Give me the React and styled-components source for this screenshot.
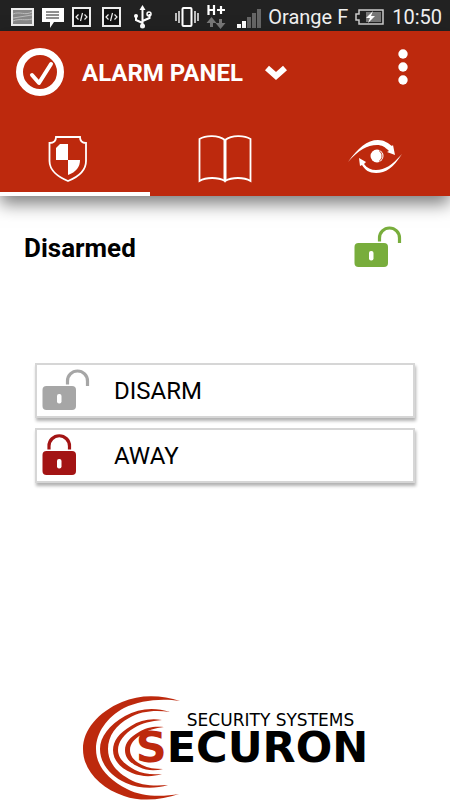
import React, { useState } from 'react'
import styled, { createGlobalStyle } from 'styled-components'

const GlobalStyle = createGlobalStyle`
  *{
    box-sizing: border-box;
  }
  body{
    margin: 0;
    background: #fff;
    color: #000;
    font-family: Roboto, "Liberation Sans", sans-serif;
  }
  button{
    font-family: inherit;
    border: none;
    margin: 0;
    padding: 0;
    background: none;
    color: inherit;
    cursor: pointer;
  }
  svg{
    display: block;
    flex: none;
  }
`

const Page = styled.div`
  min-height: 100vh;
  display: flex;
  flex-direction: column;
`

const StatusBar = styled.div`
  display: flex;
  justify-content: space-between;
  align-items: center;
  height: 31px;
  padding: 2px 8px 0 10px;
  background: #222;
  color: #f0f0f0;
  font-size: 20px;
  line-height: 28px;
  white-space: nowrap;
`

const StatusGroup = styled.div`
  display: flex;
  align-items: center;
  gap: ${props => props.$gap}px;
`

const Header = styled.header`
  background: #bd290d;
  color: #fff;
  box-shadow: 0 8px 16px rgba(0, 0, 0, 0.5);
`

const TitleRow = styled.div`
  display: flex;
  align-items: center;
  height: 82px;
  padding: 0 32px 0 16px;
`

const PanelButton = styled.button`
  display: flex;
  align-items: center;
  gap: 21px;
  margin-left: 18px;
  padding-top: 2px;
`

const Title = styled.span`
  font-size: 24px;
  font-weight: 700;
  line-height: 32px;
`

const MenuButton = styled.button`
  margin-left: auto;
  padding-bottom: 10px;
`

const Tabs = styled.nav`
  display: grid;
  grid-template-columns: repeat(3, 1fr);
  height: 83px;
`

const Tab = styled.button`
  display: flex;
  justify-content: center;
  align-items: center;
  padding-top: 12px;
  border-bottom: 4px solid ${props => props.$active ? '#fff' : 'transparent'};
`

const Status = styled.section`
  display: flex;
  justify-content: space-between;
  align-items: center;
  padding: 28px 48px 0 24px;
  h2{
    margin: 0;
    font-size: 26px;
    font-weight: 700;
    line-height: 48px;
  }
`

const Actions = styled.section`
  display: flex;
  flex-direction: column;
  gap: 10px;
  padding: 91px 35px 40px;
`

const ActionButton = styled.button`
  display: flex;
  align-items: center;
  gap: 24px;
  height: 55px;
  padding-left: 5px;
  border: 2px solid #d6d6d6;
  background: #fff;
  box-shadow: 1px 3px 3px rgba(0, 0, 0, 0.3);
  font-size: 24px;
  line-height: 32px;
`

const Brand = styled.footer`
  display: flex;
  justify-content: center;
  margin-top: auto;
`

const BrandText = styled.div`
  display: flex;
  flex-direction: column;
  align-items: flex-end;
  margin-left: -46px;
  padding-top: 15px;
  font-family: "DejaVu Sans", sans-serif;
  white-space: nowrap;
`

const Tagline = styled.span`
  padding-right: 14px;
  font-size: 17px;
  line-height: 20px;
`

const BrandName = styled.strong`
  font-size: 43px;
  font-weight: 700;
  line-height: 34px;
  span{
    color: #bd290d;
  }
`

function StatusIcon({ children }) {
  return (
    <svg width="24" height="24" viewBox="0 0 24 24" fill="none" aria-hidden="true">
      {children}
    </svg>
  )
}

function CodeIcon() {
  return (
    <StatusIcon>
      <rect x="3" y="3" width="17" height="18" fill="#111" stroke="#eee" strokeWidth="2" />
      <path d="M8.500 9.500 6 12l2.500 2.500M14.500 9.500 17 12l-2.500 2.500M12.500 8l-2 8" stroke="#eee" strokeWidth="1.200" />
    </StatusIcon>
  )
}

function LockIcon({ color, open }) {
  return (
    <svg width="48" height="44" viewBox="0 0 48 44" fill="none" aria-hidden="true">
      <rect x="0.500" y="17" width="33.500" height="24" rx="4" fill={color} />
      <rect x="15" y="25" width="4.500" height="9.500" rx="2" fill="#fff" />
      <path
        d={open ? 'M25.500 15.500v-3.500a10 10 0 0 1 20 0v5' : 'M7 15.500v-3.500a10 10 0 0 1 20.500 0v3.500'}
        stroke={color}
        strokeWidth="3.200"
      />
    </svg>
  )
}

function ShieldIcon() {
  return (
    <svg width="54" height="50" viewBox="0 0 54 50" fill="none" aria-hidden="true">
      <path d="M8 3h24c0 4 2 6 6 6v18c0 9-8 16-18 20C10 43 1.500 36 1.500 27V9C6 9 8 7 8 3z" stroke="#fff" strokeWidth="1.800" />
      <path d="M20 10v16H8V14l4-4z" fill="#fff" />
      <path d="M20 26h12c0 7-4 12-12 15z" fill="#fff" />
    </svg>
  )
}

function BookIcon() {
  return (
    <svg width="54" height="50" viewBox="0 0 54 50" fill="none" aria-hidden="true">
      <path d="M27 6C20 1 8 1 1.500 5v42C8 43 20 43 27 47zM27 6C34 1 46 1 52.500 5v42C46 43 34 43 27 47z" stroke="#fff" strokeWidth="1.800" />
      <path d="M27 6v41" stroke="#fff" strokeWidth="3" />
    </svg>
  )
}

function EyeIcon() {
  return (
    <svg width="54" height="50" viewBox="0 0 54 50" fill="none" aria-hidden="true">
      <path d="M0 28C10 14 19 6 30 6c6 0 10 3 14 6l1-1 2 10-8-3 2-1c-4-4-7-6-12-6C19 11 11 16 0 28z" fill="#fff" />
      <path d="M54 20C45 34 38 39 28 39c-7 0-11-3-14-8l-2 1-1-8 7 4-2 2c3 4 7 6 12 6 9 0 16-5 26-16z" fill="#fff" />
      <circle cx="29" cy="22" r="6.500" fill="#fff" />
      <path d="M31 16.500c4 3 4 8 0 11" stroke="#bd290d" strokeWidth="0.900" />
    </svg>
  )
}

function BrandArcs() {
  return (
    <svg width="100" height="105" viewBox="0 0 100 105" fill="#bd290d" aria-hidden="true">
      <path d="M98 6C80 0 58-1 40 7 16 17 1 35 1 54c0 21 17 39 41 47 17 6 38 4 55-2-17 3-37 3-52-5-20-10-31-24-31-40s11-32 28-41C58 5 80 3 98 6z" />
      <path d="M88 17C73 12 57 13 43 21 27 30 18 42 18 54c0 14 10 27 26 34 14 6 29 6 42 2-13 1-27 1-39-6-14-8-21-18-21-30 0-13 8-24 21-31 12-7 26-8 41-6z" />
      <path d="M80 25c-11-2-22 0-31 6-12 7-18 15-18 24 0 10 7 18 19 23 10 4 20 4 30 1-10 1-19 0-27-4-11-6-17-12-17-20s6-16 16-22c8-5 17-7 28-8z" />
      <path d="M82 32c-9-1-18 0-25 5-9 5-14 11-14 18 0 8 5 13 14 17 8 4 16 4 24 2-8 0-15-1-21-4-8-4-12-9-12-15s4-11 11-15c7-5 14-7 23-8z" />
    </svg>
  )
}

const tabs = [
  { id: 'alarm', label: 'Alarm', Icon: ShieldIcon },
  { id: 'events', label: 'Events', Icon: BookIcon },
  { id: 'cameras', label: 'Cameras', Icon: EyeIcon }
]

function PhoneStatus() {
  return (
    <StatusBar>
      <StatusGroup $gap={6}>
        <StatusIcon>
          <rect x="2" y="4" width="21" height="16" fill="#888" stroke="#eee" strokeWidth="2" />
          <path d="M3 9c7-3 12 2 19-2M3 13l19-3M3 16c7-3 12 0 19-2" stroke="#bbb" />
        </StatusIcon>
        <StatusIcon>
          <path d="M2 3h22v14H14l-4 6v-6H2z" fill="#fff" />
          <path d="M6 7h13M6 10h13M6 13h13" stroke="#222" />
        </StatusIcon>
        <CodeIcon />
        <CodeIcon />
        <StatusIcon>
          <path d="M12.500 3v19M12.500 18 6 15v-4M12.500 16l7-3V9" stroke="#fff" strokeWidth="2" />
          <path d="m12.500 0 3 5h-6z" fill="#fff" />
          <circle cx="6" cy="11" r="2" fill="#fff" />
          <circle cx="19" cy="9" r="2" stroke="#fff" strokeWidth="1.500" />
          <circle cx="12.500" cy="21" r="2.500" fill="#fff" />
        </StatusIcon>
      </StatusGroup>
      <StatusGroup $gap={7}>
        <StatusIcon>
          <rect x="7.500" y="3" width="9" height="18" rx="1" stroke="#fff" strokeWidth="2" />
          <path d="M4 6v12M1 8v8M20 6v12M23 8v8" stroke="#fff" strokeWidth="1.400" />
        </StatusIcon>
        <StatusIcon>
          <path d="M2.500 0v10M8 0v10M2 5h6M11 5h8M15 1v8" stroke="#fff" strokeWidth="2.200" />
          <path d="m5.500 12 5 6H7v4H4v-4H.500zM14.500 24l-5-6H13v-4h3v4h3.500z" fill="#777" />
        </StatusIcon>
        <StatusIcon>
          <path d="M0 19h4v4H0zM5 16h4v7H5z" fill="#fff" />
          <path d="M10 12h4v11h-4zM15 8h4v15h-4zM20 4h4v19h-4z" fill="#666" />
        </StatusIcon>
        <span>Orange F</span>
        <svg width="30" height="18" viewBox="0 0 30 18" fill="none" aria-hidden="true">
          <path d="M4 2h24v14H4v-4H1V6h3z" fill="#222" stroke="#ccc" strokeWidth="1.500" />
          <path d="M11 4h15v10H11z" fill="#777" />
          <path d="m18 3-7 7h4l-2 5 7-7h-4z" fill="#fff" />
        </svg>
        <span>10:50</span>
      </StatusGroup>
    </StatusBar>
  )
}

function App() {
  const [activeTab, setActiveTab] = useState('alarm')

  return (
    <Page>
      <GlobalStyle />
      <PhoneStatus />
      <Header>
        <TitleRow>
          <svg width="48" height="48" viewBox="0 0 48 48" fill="none" aria-hidden="true">
            <circle cx="24" cy="24" r="20.500" stroke="#fff" strokeWidth="7" />
            <path d="m16 27 7 8 12-19" stroke="#fff" strokeWidth="4" strokeLinecap="round" strokeLinejoin="round" />
          </svg>
          <PanelButton>
            <Title>ALARM PANEL</Title>
            <svg width="24" height="16" viewBox="0 0 24 16" fill="none" aria-hidden="true">
              <path d="m3 3 9 8 9-8" stroke="#fff" strokeWidth="6" />
            </svg>
          </PanelButton>
          <MenuButton aria-label="Menu">
            <svg width="30" height="38" viewBox="0 0 30 38" fill="#fff" aria-hidden="true">
              <circle cx="15" cy="6" r="4.700" />
              <circle cx="15" cy="19" r="4.700" />
              <circle cx="15" cy="32" r="4.700" />
            </svg>
          </MenuButton>
        </TitleRow>
        <Tabs>
          {tabs.map(({ id, label, Icon }) => (
            <Tab key={id} aria-label={label} $active={id === activeTab} onClick={() => setActiveTab(id)}>
              <Icon />
            </Tab>
          ))}
        </Tabs>
      </Header>
      <Status>
        <h2>Disarmed</h2>
        <LockIcon color="#78ad3c" open />
      </Status>
      <Actions>
        <ActionButton>
          <LockIcon color="#a6a6a6" open />
          DISARM
        </ActionButton>
        <ActionButton>
          <LockIcon color="#a31414" />
          AWAY
        </ActionButton>
      </Actions>
      <Brand>
        <BrandArcs />
        <BrandText>
          <Tagline>SECURITY SYSTEMS</Tagline>
          <BrandName><span>S</span>ECURON</BrandName>
        </BrandText>
      </Brand>
    </Page>
  )
}

export default App
